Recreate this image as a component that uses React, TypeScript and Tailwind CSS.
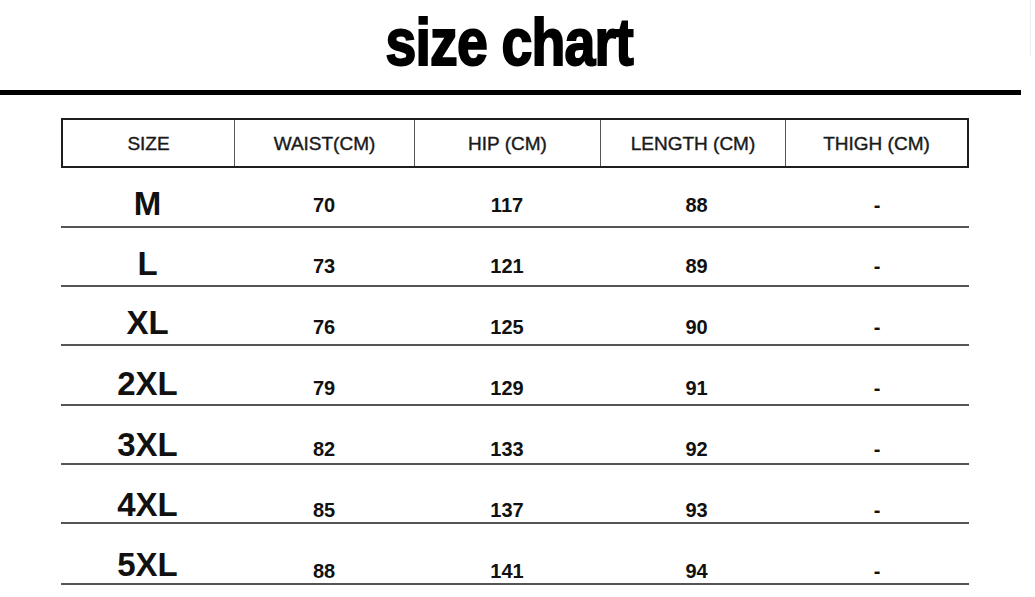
import React from 'react';

const cols = ['SIZE', 'WAIST(CM)', 'HIP (CM)', 'LENGTH (CM)', 'THIGH (CM)'];

const rows = [
    { size: 'M', waist: '70', hip: '117', length: '88', h: 'h-[60px]', sp: 'pt-[19px]', np: 'pt-[27px]' },
    { size: 'L', waist: '73', hip: '121', length: '89', h: 'h-[59px]', sp: 'pt-[19px]', np: 'pt-[28px]' },
    { size: 'XL', waist: '76', hip: '125', length: '90', h: 'h-[59px]', sp: 'pt-[19px]', np: 'pt-[30px]' },
    { size: '2XL', waist: '79', hip: '129', length: '91', h: 'h-[60px]', sp: 'pt-[21px]', np: 'pt-[32px]' },
    { size: '3XL', waist: '82', hip: '133', length: '92', h: 'h-[59px]', sp: 'pt-[22px]', np: 'pt-[33px]' },
    { size: '4XL', waist: '85', hip: '137', length: '93', h: 'h-[59px]', sp: 'pt-[23px]', np: 'pt-[35px]' },
    { size: '5XL', waist: '88', hip: '141', length: '94', h: 'h-[61px]', sp: 'pt-[24px]', np: 'pt-[37px]' },
];

const headGrid = 'grid grid-cols-[171px_180px_186px_185px_182px]';
const rowGrid = 'grid grid-cols-[173px_180px_186px_185px_184px]';

const App = () => {
    return (
        <div className="relative w-[1035px] h-[597px] bg-white overflow-hidden font-['Liberation_Sans',Arial,sans-serif] text-[#111]">
            {/* faint edge on the right */}
            <div className="absolute top-0 right-[4px] w-px h-[56px] bg-[#ececec]"></div>

            {/* Title */}
            <div className="h-[90px] flex justify-center pr-[17px]">
                <h1 className="mt-[9px] text-[66px] leading-none font-bold tracking-[-1px] scale-x-[0.84] origin-center [-webkit-text-stroke:2px_black] text-black">
                    size chart
                </h1>
            </div>
            <div className="w-[1021px] h-[5px] bg-black"></div>

            {/* Table */}
            <div className="ml-[61px] mt-[23px] w-[908px]">
                <div className={`${headGrid} h-[50px] border-2 border-[#1e1e1e]`}>
                    {cols.map((c, i) => (
                        <div
                            key={c}
                            className={`flex items-center justify-center pt-[3px] text-[19px] text-[#1a1a1a] [-webkit-text-stroke:0.4px_#1a1a1a] ${i > 0 ? 'border-l border-[#555]' : ''}`}
                        >
                            {c}
                        </div>
                    ))}
                </div>

                {rows.map(r => (
                    <div key={r.size} className={`${rowGrid} ${r.h} border-b-2 border-[#555]`}>
                        <div className={`flex justify-center ${r.sp} text-[33px] leading-none font-bold`}>{r.size}</div>
                        <div className={`flex justify-center ${r.np} text-[20px] leading-none font-bold`}>{r.waist}</div>
                        <div className={`flex justify-center ${r.np} text-[20px] leading-none font-bold`}>{r.hip}</div>
                        <div className={`flex justify-center ${r.np} pl-[8px] text-[20px] leading-none font-bold`}>{r.length}</div>
                        <div className={`flex justify-center ${r.np} text-[20px] leading-none font-bold`}>-</div>
                    </div>
                ))}
            </div>
        </div>
    );
};

export default App;
